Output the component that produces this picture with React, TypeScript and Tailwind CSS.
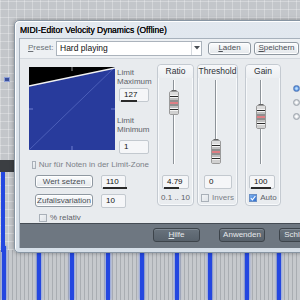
import React from "react";

const F = "font-['Liberation_Sans',Arial,sans-serif]";

function Thumb() {
  return (
    <svg width="12" height="26" viewBox="0 0 12 26" className="block">
      <line x1="3.5" y1="0.5" x2="8.5" y2="0.5" stroke="#666" />
      <rect x="1.5" y="1.5" width="9" height="23" rx="1.5" fill="#f4f4f4" stroke="#9a9a9a" />
      <rect x="2" y="2" width="8" height="3" fill="#dcdcdc" />
      <rect x="2" y="21" width="8" height="3" fill="#d0d0d0" />
      <line x1="2" y1="6.5" x2="10" y2="6.5" stroke="#2a2a2a" />
      <line x1="2" y1="9" x2="10" y2="9" stroke="#8a8a8a" />
      <line x1="2" y1="11" x2="10" y2="11" stroke="#2a2a2a" />
      <line x1="2" y1="13" x2="10" y2="13" stroke="#d0303a" strokeWidth="1.2" />
      <line x1="2" y1="15" x2="10" y2="15" stroke="#2a2a2a" />
      <line x1="2" y1="17" x2="10" y2="17" stroke="#8a8a8a" />
      <line x1="2" y1="19.5" x2="10" y2="19.5" stroke="#2a2a2a" />
    </svg>
  );
}

function Slider({ top }: { top: number }) {
  return (
    <div className="relative h-[85px] w-[12px]">
      <div className="absolute left-[5px] w-[2px] top-0 bottom-[1px] bg-[linear-gradient(90deg,#8d9399_50%,#ffffff_50%)]" />
      <div className="absolute left-0" style={{ top }}>
        <Thumb />
      </div>
    </div>
  );
}

function Field({ value, w, underline }: { value: string; w: string; underline?: string }) {
  return (
    <div
      className={`${w} h-[14px] flex items-center bg-[#f5f6f8] border border-[#c3c9cf] rounded-[2px] pl-[4px] text-[8px] leading-none text-[#111] relative`}
    >
      <span>{value}</span>
      {underline ? (
        <div className={`absolute left-[1px] bottom-[-1px] h-[2px] ${underline} bg-[#2a2a2a]`} />
      ) : null}
    </div>
  );
}

function Check({ checked }: { checked?: boolean }) {
  return checked ? (
    <div className="w-[8px] h-[8px] border border-[#6a8fc4] bg-[linear-gradient(135deg,#7fb2ef,#2f6fd0)] flex items-center justify-center">
      <svg width="6" height="6" viewBox="0 0 6 6">
        <path d="M0.8 3.2 L2.4 4.8 L5.4 1" stroke="#fff" strokeWidth="1.1" fill="none" />
      </svg>
    </div>
  ) : (
    <div className="w-[8px] h-[8px] border border-[#a9b0b8] bg-[linear-gradient(135deg,#f2f4f6,#dfe3e7)]" />
  );
}

function Btn({ label, w, first }: { label: string; w: string; first?: boolean }) {
  return (
    <div
      className={`${w} h-[13px] flex items-center justify-center rounded-[3px] border border-[#8f98a1] bg-[linear-gradient(#fbfcfd,#e3e7eb)] shadow-[inset_0_0_0_1px_#ffffff] text-[8px] leading-none text-[#4a4f55]`}
    >
      {first ? (
        <span>
          <span className="underline">{label[0]}</span>
          {label.slice(1)}
        </span>
      ) : (
        label
      )}
    </div>
  );
}

function FootBtn({ label, w, u }: { label: string; w: string; u?: boolean }) {
  return (
    <div
      className={`${w} h-[14px] shrink-0 flex items-center justify-center rounded-[3px] border border-[#3d444b] bg-[linear-gradient(#68727c,#58626c)] shadow-[inset_0_1px_0_#7f8993] text-[8px] leading-none text-[#e6e9ec]`}
    >
      {u ? (
        <span>
          <span className="underline">{label[0]}</span>
          {label.slice(1)}
        </span>
      ) : (
        label
      )}
    </div>
  );
}

function Panel({
  title,
  w,
  ml,
  children,
  thumbTop,
}: {
  title: string;
  w: string;
  ml: string;
  children: React.ReactNode;
  thumbTop: number;
}) {
  return (
    <div
      className={`${w} ${ml} h-[142px] rounded-[4px] border border-[#c4cad1] shadow-[inset_0_0_0_1px_#f7f9fb] bg-[#e9ecef] flex flex-col items-center`}
    >
      <div className="h-[13px] w-full rounded-t-[4px] bg-[linear-gradient(#f7f8fa,#eceff2)] flex items-center justify-center text-[8.5px] leading-none text-[#2d3136]">
        {title}
      </div>
      <div className="mt-[2px] w-full flex justify-center pr-[4px]">
        <Slider top={thumbTop} />
      </div>
      {children}
    </div>
  );
}

export default function App() {
  const bars = [2, 37, 70, 106, 140, 175, 208, 245, 277];
  return (
    <div className={`relative w-[300px] h-[300px] overflow-hidden ${F}`}>
      <div className="flex flex-col w-full h-full">
        <div className="h-[250px] bg-[#c3c6ca] bg-[repeating-linear-gradient(90deg,rgba(255,255,255,0.28)_0_1px,transparent_1px_8px),repeating-linear-gradient(0deg,rgba(255,255,255,0.28)_0_1px,transparent_1px_8px)]" />
        <div className="h-[50px] bg-[repeating-linear-gradient(90deg,#a9adb2_0_1px,#c6c9cd_1px_4px)]" />
      </div>
      {bars.map((x) => (
        <div
          key={x}
          className="absolute top-[246px] bottom-0 w-[4px] bg-[#2447e0] shadow-[0_0_3px_#5f7cf0]"
          style={{ left: x }}
        />
      ))}
      <div className="absolute left-[1px] top-[172px] h-[80px] w-[4px] bg-[#2447e0]" />
      <div className="absolute left-[4px] top-[77px] w-[6px] h-[5px] bg-[#3a4f9a] border border-[#8ea0d8]" />
      <div className="absolute left-0 top-[160px] w-[14px] h-[12px] bg-[#3b3e42]" />

      <div className="absolute left-[14px] top-[20px] w-[300px] h-[233px] rounded-tl-[5px] rounded-bl-[5px] border border-[#8795a3] bg-[linear-gradient(#e2e8ef,#d6dfe8)] shadow-[0_0_4px_rgba(0,0,0,0.35),inset_1px_1px_0_#ffffff]">
        <div className="h-[17px] pl-[5px] pt-[1px] flex items-center text-[8.5px] leading-none text-[#0d0d0d] [text-shadow:0_0_0.4px_#000]">
          MIDI-Editor Velocity Dynamics (Offline)
        </div>
        <div className="ml-[4px] h-[210px] border-l border-t border-[#a7b1bc] bg-[#e8ebee] flex flex-col">
          <div className="h-[20px] flex items-center bg-[#edf0f3] border-b border-[#d3d8de]">
            <span className="ml-[8px] w-[28px] text-[8px] leading-none text-[#6b7076]">
              <span className="underline">P</span>reset:
            </span>
            <div className="w-[146px] h-[15px] border border-[#abb3bc] bg-white flex items-center">
              <span className="pl-[3px] text-[8.5px] leading-none text-[#111] flex-1">Hard playing</span>
              <div className="w-[10px] h-full border-l border-[#d5d9de] flex items-center justify-center">
                <svg width="6" height="4" viewBox="0 0 6 4">
                  <path d="M0 0 H6 L3 3.5 Z" fill="#4a4f55" />
                </svg>
              </div>
            </div>
            <div className="ml-[6px]">
              <Btn label="Laden" w="w-[43px]" first />
            </div>
            <div className="ml-[3px]">
              <Btn label="Speichern" w="w-[45px]" first />
            </div>
          </div>

          <div className="h-[164px] flex">
            <div className="ml-[9px] w-[120px] shrink-0 flex flex-col pt-[8px]">
              <div className="flex">
                <svg width="86" height="83" viewBox="0 0 86 83" className="block shrink-0">
                  <rect width="86" height="83" fill="#000" />
                  <polygon points="0,19 86,1 86,83 0,83" fill="#283b9c" />
                  <line x1="0" y1="83" x2="86" y2="0" stroke="#5668c0" strokeWidth="0.8" />
                  <line x1="0" y1="19" x2="86" y2="1" stroke="#f2f2f2" strokeWidth="1.3" />
                  <line x1="43" y1="0" x2="43" y2="4" stroke="#8c8c8c" />
                  <line x1="0" y1="42" x2="4" y2="42" stroke="#6f7fd0" />
                  <line x1="82" y1="42" x2="86" y2="42" stroke="#6f7fd0" />
                  <line x1="43" y1="79" x2="43" y2="83" stroke="#6f7fd0" />
                </svg>
                <div className="ml-[2px] flex flex-col">
                  <div className="text-[8px] leading-[9px] text-[#5d6268] pt-[1px]">
                    Limit
                    <br />
                    Maximum
                  </div>
                  <div className="mt-[2px] ml-[2px]">
                    <Field value="127" w="w-[30px]" underline="w-[16px]" />
                  </div>
                  <div className="mt-[14px] text-[8px] leading-[9px] text-[#5d6268]">
                    Limit
                    <br />
                    Minimum
                  </div>
                  <div className="mt-[6px] ml-[2px]">
                    <Field value="1" w="w-[30px]" />
                  </div>
                </div>
              </div>
              <div className="mt-[6px] h-[12px] flex items-center pl-[3px]">
                <Check />
                <span className="ml-[3px] text-[8px] leading-none text-[#7b8087] whitespace-nowrap">
                  Nur für Noten in der Limit-Zone
                </span>
              </div>
              <div className="mt-[4px] flex items-center pl-[6px]">
                <Btn label="Wert setzen" w="w-[58px]" />
                <div className="ml-[8px]">
                  <Field value="110" w="w-[25px]" underline="w-[24px]" />
                </div>
              </div>
              <div className="mt-[5px] flex items-center pl-[6px]">
                <Btn label="Zufallsvariation" w="w-[58px]" />
                <div className="ml-[8px]">
                  <Field value="10" w="w-[25px]" />
                </div>
              </div>
              <div className="mt-[5px] h-[10px] flex items-center pl-[10px]">
                <Check />
                <span className="ml-[3px] text-[8px] leading-none text-[#5d6268]">% relativ</span>
              </div>
            </div>

            <div className="flex pt-[5px]">
              <Panel title="Ratio" w="w-[37px]" ml="ml-[8px]" thumbTop={10}>
                <div className="mt-[10px]">
                  <Field value="4.79" w="w-[27px]" underline="w-[15px]" />
                </div>
                <div className="mt-[3px] h-[13px] flex items-center text-[8px] leading-none text-[#5d6268] whitespace-nowrap">
                  0.1 .. 10
                </div>
              </Panel>
              <Panel title="Threshold" w="w-[41px]" ml="ml-[3px]" thumbTop={59}>
                <div className="mt-[10px] pl-[1px]">
                  <Field value="0" w="w-[28px]" />
                </div>
                <div className="mt-[3px] h-[13px] flex items-center text-[8px] leading-none text-[#7b8087]">
                  <Check />
                  <span className="ml-[3px]">Invers</span>
                </div>
              </Panel>
              <Panel title="Gain" w="w-[36px]" ml="ml-[7px]" thumbTop={24}>
                <div className="mt-[10px] pr-[2px]">
                  <Field value="100" w="w-[26px]" underline="w-[20px]" />
                </div>
                <div className="mt-[3px] h-[13px] flex items-center text-[8px] leading-none text-[#5d6268]">
                  <Check checked />
                  <span className="ml-[3px]">Auto</span>
                </div>
              </Panel>
              <div className="ml-[12px] flex flex-col pt-[21px] gap-[7px]">
                <div className="w-[7px] h-[7px] rounded-full border border-[#5d7fb8] bg-[radial-gradient(circle,#bfe0ff_20%,#3f7fd6_70%)]" />
                <div className="w-[7px] h-[7px] rounded-full border border-[#9ea5ad] bg-[radial-gradient(circle,#ffffff_20%,#c9ced4_70%)]" />
                <div className="w-[7px] h-[7px] rounded-full border border-[#9ea5ad] bg-[radial-gradient(circle,#ffffff_20%,#c9ced4_70%)]" />
              </div>
            </div>
          </div>

          <div className="h-[26px] border-t border-[#454c54] bg-[#6e7781] flex items-start pt-[4px]">
            <div className="ml-[133px]">
              <FootBtn label="Hilfe" w="w-[47px]" u />
            </div>
            <div className="ml-[19px]">
              <FootBtn label="Anwenden" w="w-[46px]" />
            </div>
            <div className="ml-[14px]">
              <FootBtn label="Schließen" w="w-[46px]" />
            </div>
          </div>
        </div>
      </div>
    </div>
  );
}
